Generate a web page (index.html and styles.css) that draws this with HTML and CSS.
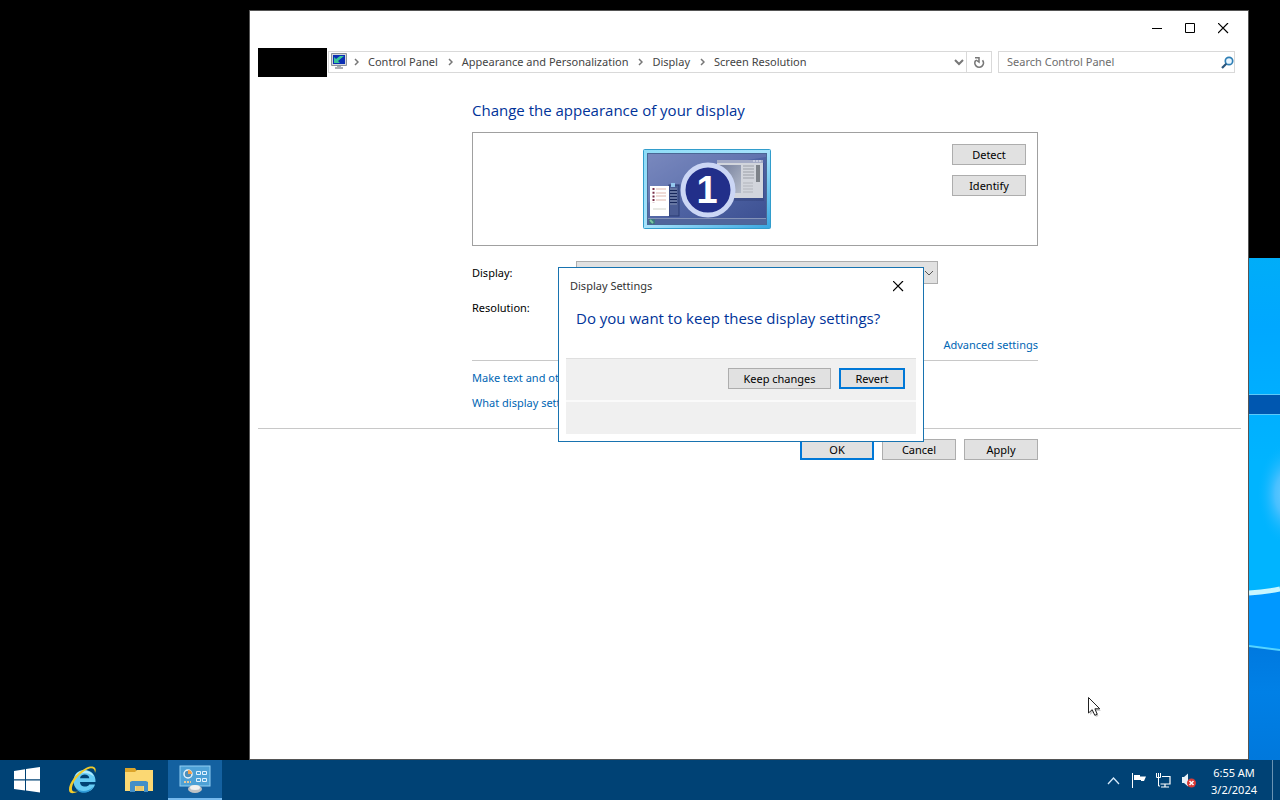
FILE: index.html
```html
<!DOCTYPE html>
<html lang="en">
<head>
  <meta charset="UTF-8">
  <meta name="viewport" content="width=device-width, initial-scale=1.0">
  <link rel="stylesheet" href="styles.css">
  <title>Screen Resolution</title>
</head>
<body>
  <div class="desktop">
    <!-- visible strip of the wallpaper -->
    <svg class="wallpaper" viewBox="0 0 31 502" preserveAspectRatio="none" aria-hidden="true">
      <defs>
        <linearGradient id="sky" x1="0" y1="0" x2="0" y2="1">
          <stop offset="0" stop-color="#00adf8"/>
          <stop offset="0.2" stop-color="#00a8ff"/>
          <stop offset="0.6" stop-color="#00b4ff"/>
          <stop offset="1" stop-color="#00b4ff"/>
        </linearGradient>
        <linearGradient id="low" x1="0" y1="0" x2="0" y2="1">
          <stop offset="0" stop-color="#0079df"/>
          <stop offset="0.4" stop-color="#0080e6"/>
          <stop offset="1" stop-color="#0078dc"/>
        </linearGradient>
        <radialGradient id="glow">
          <stop offset="0" stop-color="#6accff"/>
          <stop offset="0.4" stop-color="#48c0ff"/>
          <stop offset="1" stop-color="#00b4ff" stop-opacity="0"/>
        </radialGradient>
      </defs>
      <rect width="31" height="340" fill="url(#sky)"/>
      <rect y="137" width="31" height="19" fill="#0057b0"/>
      <path d="M0 136.500H31M0 156.500H31" stroke="#5cc8f8" stroke-width="1"/>
      <ellipse cx="38" cy="236" rx="30" ry="52" fill="url(#glow)"/>
      <path d="M0 336L31 332V392L0 388Z" fill="#0098ff"/>
      <path d="M0 335Q16 334 31 331" stroke="#c8f6ff" stroke-width="5" fill="none"/>
      <path d="M0 388L31 392V502H0Z" fill="url(#low)"/>
      <path d="M0 388L31 392" stroke="#55d4ff" stroke-width="2"/>
    </svg>

    <main class="window">
      <div class="title-bar">
        <button aria-label="Minimize"><svg width="11" height="11"><path d="M0 5.500H10" stroke="#000"/></svg></button>
        <button aria-label="Maximize"><svg width="11" height="11"><path d="M0.500 0.500H9.500V9.500H0.500Z" fill="none" stroke="#000"/></svg></button>
        <button aria-label="Close"><svg width="11" height="11"><path d="M0 0L10 10M10 0L0 10" stroke="#000" stroke-width="1.200"/></svg></button>
      </div>

      <div class="nav-bar">
        <div class="nav-buttons"></div>
        <nav class="address">
          <svg class="address-icon" width="16" height="16" viewBox="0 0 16 16">
            <path d="M0.500 0.500H15.500V12.500H0.500Z" fill="#d5d7dc" stroke="#8b929c"/>
            <path d="M2 2H14V11H2Z" fill="#0b2fb4"/>
            <path d="M3 10V4L5 6L9 3L13 3L7 8L9 10Z" fill="#39c79a"/>
            <path d="M6 13H10V14H12V16H4V14H6Z" fill="#a9adb3"/>
          </svg>
          <svg class="sep" width="5" height="8"><path d="M1 1L4 4L1 7"/></svg>
          <a href="#">Control Panel</a>
          <svg class="sep" width="5" height="8"><path d="M1 1L4 4L1 7"/></svg>
          <a href="#">Appearance and Personalization</a>
          <svg class="sep" width="5" height="8"><path d="M1 1L4 4L1 7"/></svg>
          <a href="#">Display</a>
          <svg class="sep" width="5" height="8"><path d="M1 1L4 4L1 7"/></svg>
          <a href="#">Screen Resolution</a>
          <button class="history" aria-label="Previous locations"><svg width="10" height="7"><path d="M1 1L5 5L9 1" fill="none" stroke="#777" stroke-width="2"/></svg></button>
          <button class="refresh" aria-label="Refresh">
            <svg width="12" height="13" viewBox="0 0 12 13">
              <path d="M9.500 4.200A4.300 4.300 0 1 1 2.800 4.200" fill="none" stroke="#777" stroke-width="1.700"/>
              <path d="M2 1.800H6V6L3 4" fill="none" stroke="#777" stroke-width="1.500"/>
            </svg>
          </button>
        </nav>
        <div class="search">
          <input type="text" placeholder="Search Control Panel" aria-label="Search Control Panel">
          <svg width="13" height="13" viewBox="0 0 13 13">
            <circle cx="8" cy="5" r="3.700" fill="#eaf6ff" stroke="#2f7fb5" stroke-width="1.700"/>
            <path d="M5.300 7.700L1 12" stroke="#2a557c" stroke-width="2.200"/>
          </svg>
        </div>
      </div>

      <div class="content">
        <h1>Change the appearance of your display</h1>
        <div class="preview">
          <svg class="monitor" width="128" height="80" viewBox="0 0 128 80">
            <defs>
              <linearGradient id="frame" x1="0" y1="0" x2="1" y2="1">
                <stop offset="0" stop-color="#8edcf7"/>
                <stop offset="0.5" stop-color="#a6e2fb"/>
                <stop offset="1" stop-color="#37a5e0"/>
              </linearGradient>
              <linearGradient id="screen" x1="0" y1="0" x2="1" y2="1">
                <stop offset="0" stop-color="#7585bb"/>
                <stop offset="0.5" stop-color="#5064a4"/>
                <stop offset="1" stop-color="#3b4f91"/>
              </linearGradient>
              <linearGradient id="pane" x1="0" y1="0" x2="1" y2="1">
                <stop offset="0" stop-color="#737d9c"/>
                <stop offset="1" stop-color="#b3bac8"/>
              </linearGradient>
            </defs>
            <rect x="0.500" y="0.500" width="127" height="79" rx="1" fill="url(#frame)" stroke="#329dcc"/>
            <rect x="4.500" y="4.500" width="119" height="71" fill="url(#screen)" stroke="#4a6795"/>
            <path d="M5 54Q60 16 123 8V5H5Z" fill="#8290c2" opacity="0.350"/>
            <path d="M5 70H123V75H5Z" fill="#50659b"/>
            <path d="M5 69.500H123" stroke="#8493b8"/>
            <rect x="6" y="70" width="6" height="5" fill="#3b7880"/>
            <path d="M7 71L10 74" stroke="#7ac6a0" stroke-width="2"/>

            <rect x="77" y="14" width="44" height="38" fill="#2b3a70" opacity="0.350"/>
            <rect x="74" y="13" width="46" height="36" fill="#d2d5dc"/>
            <rect x="74" y="11" width="46" height="3" fill="#a4abc6"/>
            <path d="M110 12H119" stroke="#e8ebf4" stroke-dasharray="2 1"/>
            <rect x="76" y="16" width="22" height="28" fill="url(#pane)"/>
            <path d="M100 17H111M100 20H111M100 23H111M100 26H111M100 29H111" stroke="#9b9fa7"/>
            <path d="M100 34H110M100 37H110M100 40H110M100 43H110" stroke="#b2b5bc"/>
            <path d="M115 16V33" stroke="#7d8289" stroke-width="4"/>

            <rect x="26" y="36" width="10" height="31" fill="#4a5c94" stroke="#293b73"/>
            <rect x="27" y="39" width="7" height="17" fill="#16275b"/>
            <path d="M27 40H34M27 43H34M27 46H34M27 49H34M27 52H34M27 55H34" stroke="#b6c6e9"/>
            <rect x="28" y="34" width="4" height="4" fill="#94c8ed"/>
            <rect x="7" y="37" width="19" height="30" fill="#fff"/>
            <path d="M10.500 39V54" stroke="#7b3048" stroke-width="2" stroke-dasharray="2 1.700"/>
            <path d="M13 40H23M13 44H23M13 47H23M13 51H23" stroke="#dfb7ad"/>
            <path d="M10 60H23" stroke="#d1d3ca"/>

            <circle cx="65" cy="41" r="25" fill="#222f8a" stroke="#cbd6f5" stroke-width="5"/>
            <text x="64" y="54" text-anchor="middle">1</text>
          </svg>
          <div class="preview-buttons">
            <button class="btn">Detect</button>
            <button class="btn">Identify</button>
          </div>
        </div>

        <div class="field">
          <label for="display">Display:</label>
          <div class="select-wrap">
            <select id="display"></select>
            <svg width="10" height="6"><path d="M1 1L5 5L9 1" fill="none" stroke="#555"/></svg>
          </div>
        </div>
        <div class="field">
          <label for="resolution">Resolution:</label>
          <select id="resolution" class="short"></select>
        </div>

        <div class="advanced"><a href="#">Advanced settings</a></div>
        <ul class="links">
          <li><a href="#">Make text and other items larger or smaller</a></li>
          <li><a href="#">What display settings should I choose?</a></li>
        </ul>
      </div>

      <div class="actions">
        <button class="btn primary">OK</button>
        <button class="btn">Cancel</button>
        <button class="btn">Apply</button>
      </div>
    </main>

    <section class="dialog" role="dialog" aria-labelledby="dialog-title">
      <header>
        <span id="dialog-title">Display Settings</span>
        <button aria-label="Close"><svg width="11" height="11"><path d="M0 0L10 10M10 0L0 10" stroke="#000" stroke-width="1.200"/></svg></button>
      </header>
      <h2>Do you want to keep these display settings?</h2>
      <div class="dialog-buttons">
        <button class="btn wide">Keep changes</button>
        <button class="btn primary">Revert</button>
      </div>
      <div class="dialog-footer"></div>
    </section>

    <svg class="cursor" width="14" height="21" viewBox="0 0 14 21" aria-hidden="true">
      <path d="M2 3V18L5.500 15L8 20L10.500 19L8.500 14H13Z" fill="#000" opacity="0.200"/>
      <path d="M0.500 0.500V16L4.200 12.700L6.800 18.300L9.200 17.300L6.900 11.800H11.800Z" fill="#fff" stroke="#222"/>
    </svg>
  </div>

  <footer class="taskbar">
    <button aria-label="Start">
      <svg width="26" height="26" viewBox="0 0 26 26"><path d="M0 4L11 2.300V12.300H0ZM12 2.100L26 0V12.300H12ZM0 13.500H11V23.500L0 22ZM12 13.500H26V25.500L12 23.600Z" fill="#fff"/></svg>
    </button>
    <button aria-label="Internet Explorer">
      <svg width="32" height="32" viewBox="0 0 32 32">
        <path d="M28.500 18H13C13.200 21.300 15.300 22.600 18 22.600C20 22.600 21.500 22 22.300 20.500H28C26.500 25.500 22.500 28 17.500 28C11 28 6.500 23.500 6.500 17C6.500 10.500 11 6 17.500 6C24.500 6 29 11 28.500 18ZM22.300 14.200C22 11.600 20.200 10.400 17.800 10.400C15.300 10.400 13.400 11.600 13 14.200Z" fill="#68ccf4"/>
        <path d="M8 12C10 8 14 6.500 17.500 6.500C22 6.500 25.500 9 27 12.500C21 8 14 8 8 12Z" fill="#b4ecff"/>
        <path d="M9 24C13 28 21 28 26 23C22 31 11 30 9 24Z" fill="#2f9bd8"/>
        <path d="M28 9C30.500 3.500 26 0.500 19 4C10 8.500 1.500 19 2 26C2.300 30 6.500 30 11 27.500C6 28.500 4.500 27 5 23.500C6 17 13 9 20 5.500C25 3 28 4 28 9Z" fill="#f1cb2b"/>
      </svg>
    </button>
    <button aria-label="File Explorer">
      <svg width="30" height="26" viewBox="0 0 30 26">
        <path d="M1 1H11L13 4H29V24H1Z" fill="#dca52a"/>
        <path d="M1 5H11L13 3H29V24H1Z" fill="#fbd873"/>
        <path d="M6 25V15L8 14H22L24 15V25H20V19H11V25Z" fill="#438fc7"/>
        <path d="M12 19H19V24H12Z" fill="#e9c76c"/>
      </svg>
    </button>
    <button class="active" aria-label="Control Panel">
      <svg width="32" height="30" viewBox="0 0 32 30">
        <rect x="1" y="2" width="30" height="20" fill="#4da1d6" stroke="#92d0f3"/>
        <circle cx="9" cy="10" r="4" fill="#4d8fbb" stroke="#e8f3fa" stroke-width="1.500"/>
        <path d="M9 6A4 4 0 0 1 13 10H9Z" fill="#f1a04c"/>
        <path d="M17.500 7.500H21.500V10.500H17.500ZM23.500 7.500H27.500V10.500H23.500ZM17.500 14.500H21.500V17.500H17.500ZM23.500 14.500H27.500V17.500H23.500Z" fill="none" stroke="#e2f3ff"/>
        <path d="M5 18H12" stroke="#e6c89b" stroke-width="2" stroke-dasharray="2 1"/>
        <ellipse cx="16" cy="25" rx="7" ry="4" fill="#bfc2c4"/>
        <ellipse cx="16" cy="23.500" rx="5" ry="2.500" fill="#f1f1ef"/>
      </svg>
    </button>

    <div class="tray">
      <button aria-label="Show hidden icons"><svg width="13" height="9"><path d="M1 8L6.500 2L12 8" fill="none" stroke="#d6eafa" stroke-width="1.300"/></svg></button>
      <button aria-label="Action Center"><svg width="15" height="15" viewBox="0 0 15 15"><path d="M1.500 0V15" stroke="#fff"/><path d="M3 2H9V3.500H15L13 8H10V7H3Z" fill="#fff"/></svg></button>
      <button aria-label="Network">
        <svg width="15" height="15" viewBox="0 0 15 15">
          <path d="M6 3.500H14V11H4.500M9 11V14M5 14H13" fill="none" stroke="#fff" stroke-width="1.200"/>
          <path d="M0.500 0V4.500H4.500V0M2.500 0V13H4" fill="none" stroke="#fff"/>
        </svg>
      </button>
      <button aria-label="Volume">
        <svg width="15" height="15" viewBox="0 0 15 15">
          <path d="M1 4H3L7 0.500V13.500L3 10H1Z" fill="#e8f1f8"/>
          <circle cx="10.500" cy="10" r="4.500" fill="#d93a37"/>
          <path d="M8.500 8L12.500 12M12.500 8L8.500 12" stroke="#fff" stroke-width="1.500"/>
        </svg>
      </button>
    </div>
    <div class="clock">
      <time>6:55 AM</time>
      <time>3/2/2024</time>
    </div>
    <div class="show-desktop"></div>
  </footer>
</body>
</html>
```
FILE: styles.css
```css
* {
  box-sizing: border-box;
}

body, h1, h2, ul {
  margin: 0;
  padding: 0;
}

body {
  display: flex;
  flex-direction: column;
  height: 100vh;
  overflow: hidden;
  background-color: #000;
  color: #000;
  font-family: "Noto Sans", "Open Sans", sans-serif;
  font-size: 11px;
  line-height: 16px;
}

button, input, select {
  font: inherit;
  color: inherit;
}

button {
  display: flex;
  align-items: center;
  justify-content: center;
  padding: 0;
  border: none;
  background: none;
}

a {
  color: #0066b4;
  text-decoration: none;
}

h1, h2 {
  color: #003399;
  font-family: "Open Sans", sans-serif;
  font-size: 15px;
  font-weight: normal;
  line-height: 22px;
}

.desktop {
  position: relative;
  display: flex;
  flex: 1;
}

.wallpaper {
  position: absolute;
  top: 258px;
  right: 0;
  bottom: 0;
  width: 31px;
  height: 502px;
}

/* Control Panel window */
.window {
  flex: 1;
  margin: 10px 31px 0 249px;
  border: 1px solid #555;
  background-color: #fff;
}

.title-bar {
  display: flex;
  justify-content: flex-end;
  height: 37px;
  padding: 0 8px;
}

.title-bar button {
  width: 33px;
  height: 34px;
}

.nav-bar {
  display: flex;
  align-items: center;
  height: 29px;
  padding: 0 13px 0 8px;
}

.nav-buttons {
  width: 69px;
  height: 29px;
  background-color: #000;
}

.address {
  display: flex;
  align-items: center;
  flex: 1;
  height: 22px;
  margin: 0 6px 1px 1px;
  padding-left: 2px;
  border: 1px solid #d9d9d9;
}

.address a {
  color: #444;
}

.address-icon {
  margin: 0 -3px 2px 0;
}

.sep {
  margin: 0 9px 0 10px;
  fill: none;
  stroke: #777;
  stroke-width: 1.5;
}

.history {
  width: 14px;
  height: 20px;
  margin-left: auto;
}

.refresh {
  width: 25px;
  height: 20px;
  border-left: 1px solid #d9d9d9;
}

.search {
  display: flex;
  align-items: center;
  width: 237px;
  height: 22px;
  margin-bottom: 1px;
  border: 1px solid #d9d9d9;
}

.search input {
  flex: 1;
  min-width: 0;
  padding: 0 8px;
  border: none;
  outline: none;
}

.search input::placeholder {
  color: #6d6d6d;
}

.content {
  width: 788px;
  padding: 22px 0 0 222px;
}

.preview {
  display: flex;
  justify-content: space-between;
  height: 114px;
  margin: 11px 0 15px;
  padding: 11px 11px 0 170px;
  border: 1px solid #a0a0a0;
}

.monitor {
  margin-top: 5px;
}

.monitor text {
  fill: #fff;
  font-family: "Liberation Sans", sans-serif;
  font-size: 38px;
  font-weight: bold;
}

.preview-buttons {
  display: flex;
  flex-direction: column;
  gap: 10px;
}

.btn {
  width: 74px;
  height: 21px;
  border: 1px solid #adadad;
  background-color: #e1e1e1;
}

.btn.primary {
  border: 2px solid #0078d7;
}

.field {
  display: flex;
  align-items: center;
  height: 23px;
  margin-bottom: 12px;
}

.field label {
  width: 104px;
}

.select-wrap {
  position: relative;
  width: 362px;
}

.select-wrap svg {
  position: absolute;
  top: 9px;
  right: 4px;
}

select {
  display: block;
  width: 100%;
  height: 23px;
  border: 1px solid #adadad;
  border-radius: 0;
  background-color: #e1e1e1;
  appearance: none;
}

select.short {
  width: 160px;
}

.advanced {
  padding: 6px 0 7px;
  text-align: right;
  border-bottom: 1px solid #c8c8c8;
}

.links {
  list-style: none;
  padding: 9px 0 17px;
}

.links li + li {
  margin-top: 9px;
}

.actions {
  display: flex;
  gap: 8px;
  margin: 0 7px 0 8px;
  padding: 10px 0 0 542px;
  border-top: 1px solid #c8c8c8;
}

/* Confirmation dialog */
.dialog {
  position: absolute;
  top: 267px;
  left: 558px;
  width: 366px;
  padding: 0 7px 7px;
  border: 1px solid #1873b0;
  background-color: #fff;
}

.dialog header {
  display: flex;
  align-items: center;
  justify-content: space-between;
  height: 36px;
  padding: 0 1px 0 4px;
  color: #333;
}

.dialog header button {
  width: 33px;
  height: 34px;
}

.dialog h2 {
  height: 54px;
  padding: 3px 0 0 10px;
}

.dialog-buttons {
  display: flex;
  justify-content: flex-end;
  gap: 8px;
  height: 42px;
  padding: 9px 11px 0 0;
  border-top: 1px solid #dfdfdf;
  background-color: #f0f0f0;
}

.dialog .btn {
  width: 66px;
}

.dialog .btn.wide {
  width: 103px;
}

.dialog-footer {
  height: 34px;
  border-top: 2px solid #fafafa;
  background-color: #f0f0f0;
}

.cursor {
  position: absolute;
  top: 697px;
  left: 1088px;
}

/* Taskbar */
.taskbar {
  display: flex;
  gap: 2px;
  height: 40px;
  background-color: #004275;
  color: #fff;
}

.taskbar > button {
  width: 54px;
}

.taskbar > .active {
  border-bottom: 2px solid #76b9ed;
  background-color: #1461a0;
}

.tray {
  display: flex;
  align-items: center;
  margin-left: auto;
}

.tray button {
  width: 25px;
  height: 40px;
}

.clock {
  display: flex;
  flex-direction: column;
  justify-content: center;
  width: 67px;
  padding: 2px 5px 0 0;
  text-align: center;
  line-height: 17px;
}

.show-desktop {
  width: 8px;
  border-left: 1px solid #6a93b3;
}
```
